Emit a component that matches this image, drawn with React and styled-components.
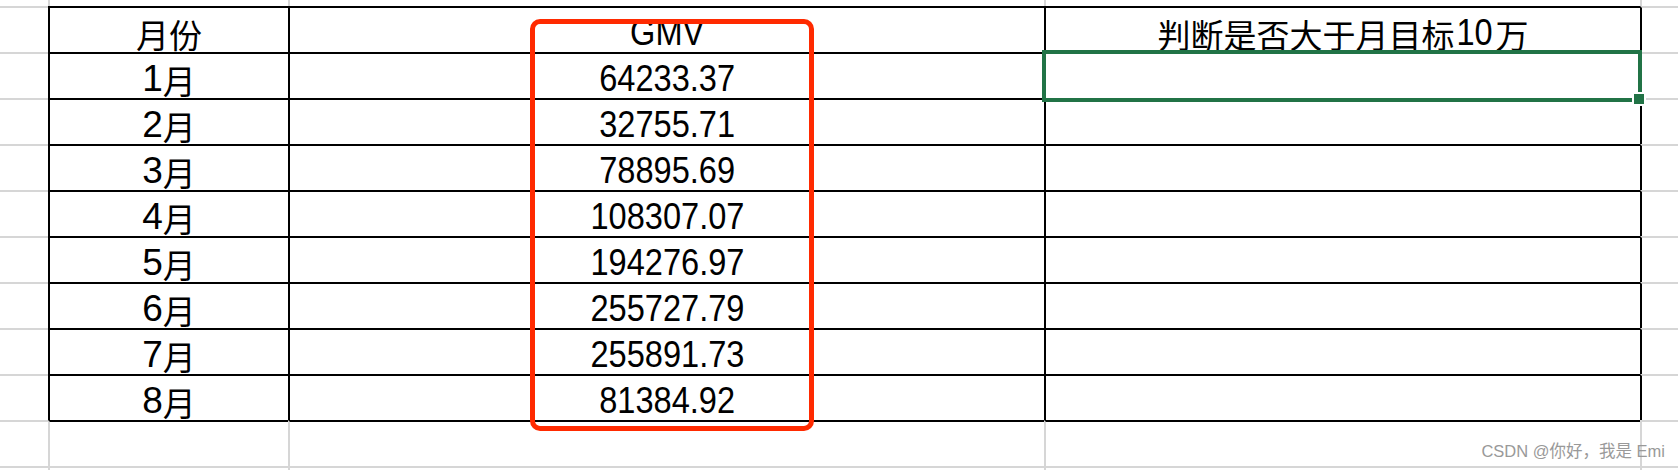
import React from "react";
import styled, { createGlobalStyle } from "styled-components";

const GlobalStyle = createGlobalStyle`
  html, body {
    margin: 0;
    padding: 0;
    background: #fff;
  }
  body {
    overflow: hidden;
    font-family: "Liberation Sans", "Noto Sans CJK SC", sans-serif;
  }
`;

const GRID = "#d6d6d6";
const INK = "#000";
const EXCEL_GREEN = "#217346";

const edge = (kind) =>
  kind === "ink" ? `2px solid ${INK}` : kind === "grid" ? `2px solid ${GRID}` : "none";

const Sheet = styled.div`
  display: grid;
  grid-template-columns: 48px 240px 756px 596px 38px;
  grid-template-rows: 6px repeat(10, 46px) 10px;
  width: 1678px;
  height: 470px;
  overflow: hidden;
`;

const Cell = styled.div`
  grid-row: ${(p) => p.$r + 1};
  grid-column: ${(p) => p.$c + 1};
  position: relative;
  z-index: ${(p) => (p.$selected ? 2 : "auto")};
  box-sizing: border-box;
  display: flex;
  align-items: flex-end;
  justify-content: center;
  padding-bottom: 1px;
  border-top: ${(p) => edge(p.$top)};
  border-left: ${(p) => edge(p.$left)};
  font-family: "Liberation Sans", "Noto Sans CJK SC", sans-serif;
  font-size: 37px;
  line-height: 1;
  color: #000;
  white-space: nowrap;

  &::after {
    content: "";
    display: ${(p) => (p.$selected ? "block" : "none")};
    position: absolute;
    top: -4px;
    left: -4px;
    right: -2px;
    bottom: -4px;
    border: 4px solid ${EXCEL_GREEN};
  }
`;

const Han = styled.span`
  font-family: "Noto Sans CJK SC", sans-serif;
  font-size: 33px;
`;

// Excel 的等线数字比较窄
const Num = styled.span`
  display: inline-block;
  transform: scaleX(0.88);
`;

const Handle = styled.span`
  position: absolute;
  z-index: 1;
  right: -6px;
  bottom: -8px;
  width: 10px;
  height: 10px;
  background: ${EXCEL_GREEN};
  border: 2px solid #fff;
`;

const Callout = styled.div`
  position: relative;
  z-index: 3;
  grid-column: 3 / 4;
  grid-row: 2 / 12;
  justify-self: center;
  width: 284px;
  margin: 13px 0 35px 12px;
  box-sizing: border-box;
  border: 5px solid #ff2a00;
  border-radius: 10px;
  pointer-events: none;
`;

const Watermark = styled.div`
  position: relative;
  z-index: 3;
  grid-column: 4 / 6;
  grid-row: 11 / 12;
  justify-self: end;
  align-self: end;
  margin: 0 13px 4px 0;
  font-family: "Liberation Sans", "Noto Sans CJK SC", sans-serif;
  font-size: 16.5px;
  color: #999;
  white-space: nowrap;
`;

const months = [
  ["1", "64233.37"],
  ["2", "32755.71"],
  ["3", "78895.69"],
  ["4", "108307.07"],
  ["5", "194276.97"],
  ["6", "255727.79"],
  ["7", "255891.73"],
  ["8", "81384.92"],
];

// row 1 是表头，2-9 是月份数据
function content(r, c) {
  if (r === 1) {
    if (c === 1) return <Han>月份</Han>;
    if (c === 2) return <Num>GMV</Num>;
    if (c === 3)
      return (
        <>
          <Han>判断是否大于月目标</Han>
          <Num>10</Num>
          <Han>万</Han>
        </>
      );
  }
  if (r >= 2 && r <= 9) {
    const [m, gmv] = months[r - 2];
    if (c === 1)
      return (
        <>
          {m}
          <Han>月</Han>
        </>
      );
    if (c === 2) return <Num>{gmv}</Num>;
  }
  return null;
}

function App() {
  const cells = [];
  for (let r = 0; r < 12; r++) {
    for (let c = 0; c < 5; c++) {
      const top = r === 0 ? "none" : r <= 10 && c >= 1 && c <= 3 ? "ink" : "grid";
      const left = c === 0 ? "none" : r >= 1 && r <= 9 ? "ink" : "grid";
      const selected = r === 2 && c === 3;
      cells.push(
        <Cell key={`${r}-${c}`} $r={r} $c={c} $top={top} $left={left} $selected={selected}>
          {content(r, c)}
          {selected && <Handle />}
        </Cell>
      );
    }
  }

  return (
    <>
      <GlobalStyle />
      <Sheet>
        {cells}
        <Callout />
        <Watermark>CSDN @你好，我是 Emi</Watermark>
      </Sheet>
    </>
  );
}

export default App;
